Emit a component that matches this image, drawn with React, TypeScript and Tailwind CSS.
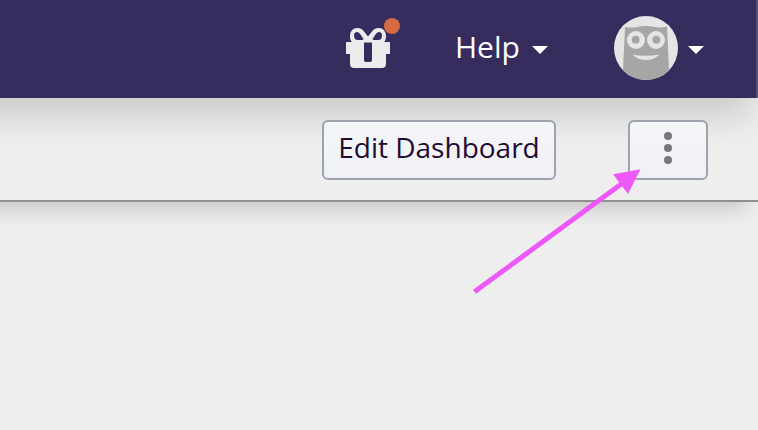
function Caret() {
  return (
    <svg width="16" height="8" viewBox="0 0 16 8" className="block" aria-hidden="true">
      <path d="M0 0H16L8 8Z" fill="#fff" />
    </svg>
  );
}

function Gift() {
  return (
    <svg width="54" height="50" viewBox="0 0 54 50" className="block" aria-hidden="true">
      <path
        fillRule="evenodd"
        d="M6 24.500C4.500 22.500 4 20.500 4 18C4 13.500 7 10 11.500 10C14.500 10 16.500 11.500 18 13.500L22 18.500L26 13.500C27.500 11.500 29.500 10 32.500 10C37 10 40 13.500 40 18C40 20.500 39.500 22.500 38 24.500ZM17.500 21L14.500 16.500C13.500 15 12.500 14 11 14C9 14 8 15.500 8 17.500C8 19.500 9 22 11 22H16.500ZM26.500 21L29.500 16.500C30.500 15 31.500 14 33 14C35 14 36 15.500 36 17.500C36 19.500 35 22 33 22H27.500Z"
        fill="#ebebeb"
      />
      <path
        fillRule="evenodd"
        d="M0 24H44V36H40V46a4 4 0 0 1-4 4H8a4 4 0 0 1-4-4V36H0ZM18 24V42a2 2 0 0 0 2 2H24a2 2 0 0 0 2-2V24Z"
        fill="#ebebeb"
      />
      <circle cx="46" cy="8" r="8" fill="#d66a43" />
    </svg>
  );
}

function Avatar() {
  return (
    <svg width="64" height="64" viewBox="0 0 64 64" className="block" aria-hidden="true">
      <defs>
        <clipPath id="face">
          <circle cx="32" cy="32" r="32" />
        </clipPath>
      </defs>
      <g clipPath="url(#face)">
        <rect width="64" height="64" fill="#e5e5e5" />
        <path d="M11 11Q17 12 23 11Q32 9 41 11Q47 12 53 10.500L55.500 64H8.500Z" fill="#a6a6a6" />
        <circle cx="22" cy="24" r="9" fill="#e5e5e5" />
        <circle cx="42" cy="24" r="9" fill="#e5e5e5" />
        <circle cx="21.700" cy="23.700" r="3.900" fill="#a6a6a6" />
        <circle cx="42.300" cy="23.700" r="3.900" fill="#a6a6a6" />
        <path d="M18.500 38.500Q32 41 45.500 38.500Q40 44 32 44Q24 44 18.500 38.500Z" fill="#e5e5e5" />
      </g>
    </svg>
  );
}

export default function App() {
  return (
    <div className="relative flex h-[430px] w-[758px] flex-col overflow-hidden bg-[#eee] font-['Open_Sans','Noto_Sans',sans-serif]">
      <header className="relative z-20 flex h-[98px] shrink-0 items-start border-r-2 border-[#574e79] bg-[#362d5e] pl-[346px] text-white shadow-[-24px_2px_32px_16px_rgba(0,0,0,0.15)]">
        <div className="pt-[18px]">
          <Gift />
        </div>
        <button className="ml-[55px] flex h-[96px] w-[93px] items-center justify-between text-[30px] leading-none">
          <span className="pb-[2px]">Help</span>
          <span className="pt-[3px]">
            <Caret />
          </span>
        </button>
        <button className="ml-[66px] flex h-[96px] items-center gap-[10px]">
          <Avatar />
          <span className="pt-[3px]">
            <Caret />
          </span>
        </button>
      </header>
      <div className="relative flex h-[104px] shrink-0 items-start justify-end gap-[72px] border-b-2 border-[#8f8f8f] bg-[#eee] pr-[50px] pt-[22px] shadow-[-24px_-6px_20px_12px_rgba(0,0,0,0.18)]">
        <button className="relative z-30 flex h-[60px] w-[234px] items-center justify-center rounded-[6px] border-2 border-[#9ca3ad] bg-linear-to-b from-[#f4f6f9] to-[#eff1f6] pb-[7px] text-[28px] leading-none whitespace-nowrap text-[#210b32]">
          Edit Dashboard
        </button>
        <button aria-label="More" className="relative z-30 flex h-[60px] w-[80px] flex-col items-center gap-1 rounded-[6px] border-2 border-[#9ca3ad] bg-linear-to-b from-[#f4f6f9] to-[#eff1f6] pt-[10px]">
          <span className="size-2 rounded-full bg-[#777]" />
          <span className="size-2 rounded-full bg-[#777]" />
          <span className="size-2 rounded-full bg-[#777]" />
        </button>
      </div>
      <svg className="pointer-events-none absolute left-[460px] top-[160px] z-40" width="190" height="140" viewBox="0 0 190 140" aria-hidden="true">
        <path d="M14.500 131.800L164 22" stroke="#ee58f8" strokeWidth="5" />
        <path d="M180.500 9.300L153 14.300L168 34Z" fill="#ee58f8" />
      </svg>
    </div>
  );
}
